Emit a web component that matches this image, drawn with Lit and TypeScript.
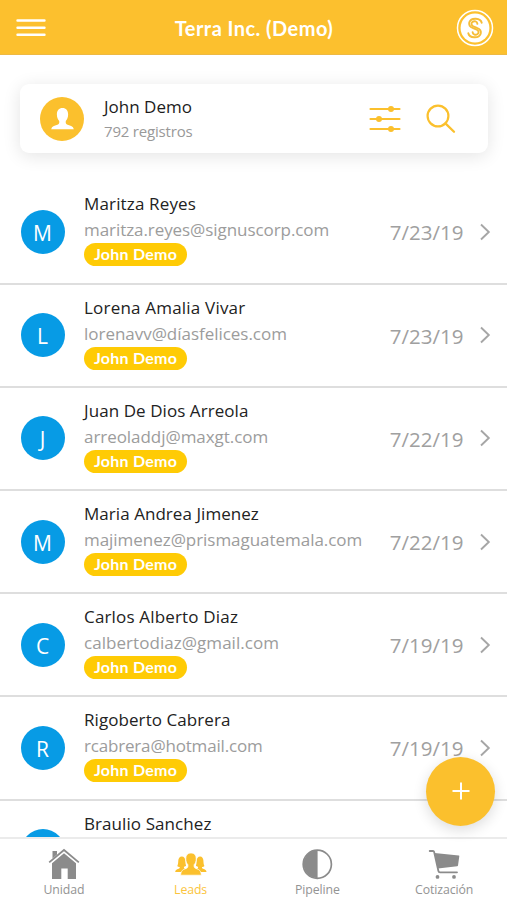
import { LitElement, html, css, svg } from "lit";
import { classMap } from "lit/directives/class-map.js";

interface Lead {
  name: string;
  nameTrack: number;
  email: string;
  emailTrack: number;
  date: string;
}

const OWNER = "John Demo";

const LEADS: Lead[] = [
  { name: "Maritza Reyes", nameTrack: 0.15, email: "maritza.reyes@signuscorp.com", emailTrack: -0.07, date: "7/23/19" },
  { name: "Lorena Amalia Vivar", nameTrack: 0.2, email: "lorenavv@díasfelices.com", emailTrack: -0.03, date: "7/23/19" },
  { name: "Juan De Dios Arreola", nameTrack: 0.07, email: "arreoladdj@maxgt.com", emailTrack: -0.05, date: "7/22/19" },
  { name: "Maria Andrea Jimenez", nameTrack: 0.05, email: "majimenez@prismaguatemala.com", emailTrack: -0.04, date: "7/22/19" },
  { name: "Carlos Alberto Diaz", nameTrack: 0.17, email: "calbertodiaz@gmail.com", emailTrack: 0.05, date: "7/19/19" },
  { name: "Rigoberto Cabrera", nameTrack: 0.07, email: "rcabrera@hotmail.com", emailTrack: -0.18, date: "7/19/19" },
  { name: "Braulio Sanchez", nameTrack: 0.08, email: "", emailTrack: 0, date: "" },
];

const person = svg`<path d="M16 2c4.600 0 7.200 3.300 7.200 8.200 0 3.600-1.300 6.600-3 8.400-.4 2.800.3 4.200 2.300 4.900 4.200 1.200 7 2 8 5.500H1.500c1-3.500 3.800-4.300 8-5.500 2-.7 2.700-2.100 2.300-4.900-1.700-1.800-3-4.800-3-8.400C8.800 5.300 11.400 2 16 2z"/>`;

const TABS = [
  {
    label: "Unidad",
    icon: svg`<path d="M4.500 3H9v3.600l-4.500 3.900z"/><path d="M1.200 14.400 16 2l14.800 12.400" fill="none" stroke="currentColor" stroke-width="1.800"/><path d="M4 15.200 16 5.200l12 10V31h-8.300V20.500h-6.400V31H4z"/>`,
  },
  {
    label: "Leads",
    icon: svg`<path d="M6.800 8.400c2.300 0 3.400 1.700 3.500 4.200.1 2.200.3 3.800.8 5.200-1 .7-2 .8-2.200 1.200 0 1 .4 1.600 1.600 2.100-1.600.8-2.700 1.500-3.200 2.900H.2c.1-2.100 1.300-2.500 3.400-3.300 1-.4 1.200-.8 1.100-1.700-.8-.2-1.900-.5-2.400-1.100.8-1.400.9-3.100 1-5.300.1-2.500 1.300-4.200 3.500-4.200z"/><path d="M25.200 8.400c-2.300 0-3.400 1.700-3.500 4.200-.1 2.200-.3 3.800-.8 5.200 1 .7 2 .8 2.200 1.200 0 1-.4 1.600-1.600 2.100 1.600.8 2.700 1.500 3.200 2.900h6.800c-.1-2.100-1.300-2.500-3.400-3.300-1-.4-1.200-.8-1.100-1.700.8-.2 1.900-.5 2.400-1.100-.8-1.400-.9-3.100-1-5.300-.1-2.500-1.300-4.200-3.200-4.200z"/><path d="M16 5c3.600 0 5.200 2.300 5.200 5.800 0 2.500-.8 4.600-2 5.800-.4 2.200 0 3.300 1.500 3.800 3.200 1 5.300 2 5.700 6.800H5.600c.4-4.800 2.500-5.800 5.700-6.800 1.500-.5 1.900-1.600 1.500-3.800-1.200-1.200-2-3.300-2-5.800C10.800 7.300 12.400 5 16 5z" stroke="#fff" stroke-width=".7"/>`,
  },
  {
    label: "Pipeline",
    icon: svg`<circle cx="16.300" cy="16.200" r="14.100" fill="none" stroke="currentColor" stroke-width="1.700"/><path d="M16.600 2.200v28a14 14 0 0 1 0-28z"/>`,
  },
  {
    label: "Cotización",
    icon: svg`<path d="M1.700 3h3.400c.5 0 .8.300 1 .9L10.400 23c.2.900.6 1.300 1.600 1.300h17" fill="none" stroke="currentColor" stroke-width="1.800" stroke-linecap="round"/><path d="M6.500 5 30.800 7.600c.5.100.6.300.5.700L30 17.500c-.1.400-.4.600-.8.700L9.900 20.500z"/><circle cx="9.500" cy="28.900" r="1.900"/><circle cx="26" cy="28.900" r="1.900"/>`,
  },
];

class AppRoot extends LitElement {
  static properties = { active: { type: String } };
  declare active: string;

  constructor() {
    super();
    this.active = "Leads";
  }

  static styles = css`
    :host {
      display: flex;
      flex-direction: column;
      position: relative;
      height: 900px;
      overflow: hidden;
      background: #fff;
      color: #222;
      font-family: "Open Sans", "Noto Sans", sans-serif;
    }
    * { box-sizing: border-box; }
    svg { display: block; fill: currentColor; flex: none; }
    .header {
      display: grid;
      grid-template-columns: 60px 1fr 60px;
      align-items: center;
      height: 55px;
      flex: none;
      padding-top: 2px;
      background: #fcc02e;
      border-bottom: 1px solid #edb944;
      color: #fff;
    }
    .menu { margin-left: 16px; }
    .brand { margin-left: 9px; }
    .title {
      margin: 0;
      padding-left: 1px;
      text-align: center;
      font: 700 20px/26px Lato, sans-serif;
      letter-spacing: 0.45px;
    }
    .card {
      display: flex;
      align-items: center;
      flex: none;
      height: 69px;
      margin: 29px 19px 0 20px;
      padding: 0 32px 0 20px;
      border-radius: 9px;
      box-shadow: 0 3px 18px rgba(0, 0, 0, 0.11);
      color: #fbc02d;
    }
    .user {
      display: grid;
      place-items: center;
      width: 44px;
      height: 44px;
      margin-right: 20px;
      border-radius: 50%;
      background: #fbc02d;
      color: #fff;
    }
    .owner { flex: 1; white-space: nowrap; }
    .owner-name { font-size: 17px; line-height: 24px; font-weight: 500; color: #1c1c1c; }
    .count { font-size: 15px; line-height: 24px; letter-spacing: -0.19px; color: #999; }
    .filter { margin-right: 25px; }
    .list { flex: 1; min-height: 0; overflow: hidden; margin-top: 28.400px; }
    .row {
      display: flex;
      align-items: center;
      height: 103.200px;
      padding: 0 16.500px 0 20.500px;
      border-bottom: 2px solid #dedede;
    }
    .avatar {
      flex: none;
      width: 44px;
      height: 44px;
      margin-right: 19.500px;
      border-radius: 50%;
      background: #079be5;
      color: #fff;
      text-align: center;
      font-size: 21px;
      line-height: 47px;
    }
    .info { flex: 1; align-self: flex-start; padding-top: 10px; white-space: nowrap; }
    .name, .email { font-size: 17px; line-height: 26px; }
    .name { color: #222; }
    .email { color: #9c9c9c; }
    .pill {
      width: 103px;
      height: 23px;
      border-radius: 11.500px;
      background: #ffcb05;
      color: #fff;
      text-align: center;
      font: 700 16px/22px Lato, sans-serif;
      letter-spacing: 0.25px;
    }
    .date { font-size: 20.500px; padding-top: 1px; color: #a0a0a0; margin-right: 15px; }
    .chevron { color: #a6a6a6; }
    .fab {
      position: absolute;
      right: 12px;
      bottom: 74.500px;
      display: grid;
      place-items: center;
      width: 69px;
      height: 69px;
      padding: 0;
      border: 0;
      border-radius: 50%;
      background: #fbc02d;
      color: #fff;
      box-shadow: 0 4px 14px rgba(0, 0, 0, 0.14);
    }
    .tabs {
      display: grid;
      grid-template-columns: repeat(4, 1fr);
      flex: none;
      height: 63px;
      border-top: 2px solid #ebebeb;
      background: #fff;
    }
    .tab {
      display: flex;
      flex-direction: column;
      align-items: center;
      padding: 9px 0 0 1px;
      color: #8b8b8b;
    }
    .tab.active { color: #fbc02d; }
    .label { margin-top: 1px; font-size: 12.300px; line-height: 18px; letter-spacing: -0.1px; opacity: 0.92; }
  `;

  private row(lead: Lead) {
    return html`
      <div class="row">
        <div class="avatar">${lead.email ? lead.name[0] : ""}</div>
        <div class="info">
          <div class="name" style="letter-spacing:${lead.nameTrack}px">${lead.name}</div>
          ${lead.email
            ? html`<div class="email" style="letter-spacing:${lead.emailTrack}px">${lead.email}</div>
                <div class="pill">${OWNER}</div>`
            : ""}
        </div>
        ${lead.date ? html`<div class="date">${lead.date}</div>` : ""}
        <svg class="chevron" width="12" height="18" viewBox="0 0 12 18">
          <path d="M2 1.500 9.800 9 2 16.500" fill="none" stroke="currentColor" stroke-width="1.900" />
        </svg>
      </div>`;
  }

  render() {
    return html`
      <header class="header">
        <svg class="menu" width="30" height="20" viewBox="0 0 30 20">
          <path d="M1.500 2.500h27M1.500 9.700h27M1.500 16.800h27" stroke="currentColor" stroke-width="2.400" stroke-linecap="round" />
        </svg>
        <h1 class="title">Terra Inc. (Demo)</h1>
        <svg class="brand" width="38" height="38" viewBox="0 0 38 38">
          <circle cx="19" cy="19" r="17.500" fill="none" stroke="#fff" stroke-width="1.500" />
          <circle cx="19" cy="19" r="14.400" />
          <g fill="none" stroke="#f6bd38" stroke-width="1.900" stroke-linecap="round">
            <path d="M25.700 13.800C24.700 8.900 15.200 8 13.300 13.300c-.8 3.200 1.300 5 3.800 5.900l3.600 1.500c2.200 1 2.300 3.200.9 4.300-1.900 1.500-4.800.6-5-1.800" />
            <path d="M12.300 24.200c1 4.900 10.500 5.800 12.400.5.800-3.200-1.300-5-3.800-5.900l-3.600-1.500c-2.200-1-2.300-3.200-.9-4.300 1.900-1.500 4.800-.6 5 1.800" />
          </g>
        </svg>
      </header>
      <section class="card">
        <div class="user"><svg width="25" height="26" viewBox="0 0 32 32">${person}</svg></div>
        <div class="owner">
          <div class="owner-name">${OWNER}</div>
          <div class="count">792 registros</div>
        </div>
        <svg class="filter" width="32" height="28" viewBox="0 0 32 28">
          <path d="M1.500 4h29M1.500 14h29M1.500 24h29" stroke="currentColor" stroke-width="2.200" stroke-linecap="round" />
          <circle cx="22" cy="4" r="3" /><circle cx="10" cy="14" r="3" /><circle cx="22" cy="24" r="3" />
        </svg>
        <svg width="30" height="30" viewBox="0 0 30 30">
          <circle cx="12" cy="12" r="10.400" fill="none" stroke="currentColor" stroke-width="2.200" />
          <path d="m19.400 19.400 8.600 8.400" stroke="currentColor" stroke-width="2.300" stroke-linecap="round" />
        </svg>
      </section>
      <main class="list">${LEADS.map((l) => this.row(l))}</main>
      <button class="fab" aria-label="Agregar">
        <svg width="18" height="18" viewBox="0 0 18 18"><path d="M9 .5v17M.5 9h17" stroke="currentColor" stroke-width="2" /></svg>
      </button>
      <nav class="tabs">
        ${TABS.map(
          (t) => html`
            <div class=${classMap({ tab: true, active: t.label === this.active })}>
              <svg width="32" height="32" viewBox="0 0 32 32">${t.icon}</svg>
              <span class="label">${t.label}</span>
            </div>`
        )}
      </nav>`;
  }
}
customElements.define("app-root", AppRoot);
